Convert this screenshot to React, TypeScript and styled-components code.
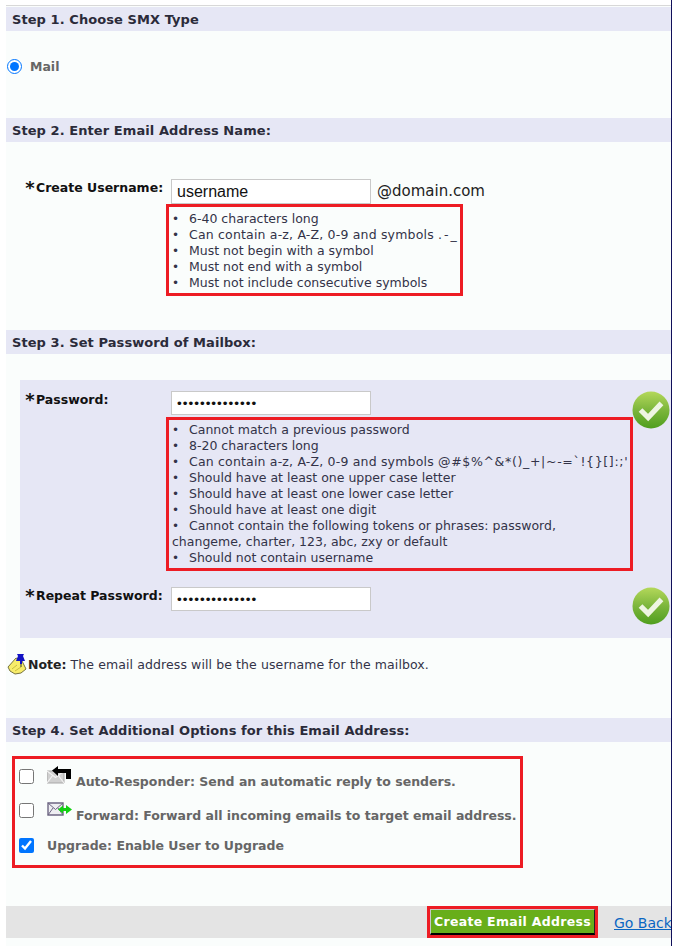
import React from "react";
import styled, { createGlobalStyle } from "styled-components";

const Global = createGlobalStyle`
  html, body { margin: 0; padding: 0; background: #fff; }
  body { font-family: "DejaVu Sans", Verdana, sans-serif; }
`;

const Page = styled("div")`
  width: 665px;
  height: 939px;
  margin-left: 6px;
  padding-top: 7px;
  background: #fafdfc;
  border-right: 1px solid #10105a;
  position: relative;
  overflow: hidden;
  &::before {
    content: "";
    position: absolute;
    left: 0;
    right: 0;
    top: 0;
    height: 5px;
    background: #fff;
    border-bottom: 1px solid #d8d8d8;
  }
`;

const StepHeader = styled("h2")<{ $top?: number }>`
  margin: ${(p) => p.$top ?? 0}px 0 0;
  height: 24px;
  padding-left: 6px;
  background: #e6e7f5;
  color: #2b2b3a;
  font-size: 13px;
  font-weight: bold;
  line-height: 25px;
  letter-spacing: 0.07px;
`;

const MailRow = styled("label")`
  display: flex;
  align-items: center;
  height: 18px;
  margin-top: 26px;
  color: #666;
  font-size: 12.5px;
  font-weight: bold;
`;

const Radio = styled("input")`
  width: 15px;
  height: 15px;
  margin: 0 8px 0 1px;
  accent-color: #0075ff;
`;

const Row = styled("div")<{ $left: number; $top: number; $bottom?: number }>`
  display: flex;
  align-items: flex-start;
  margin: ${(p) => p.$top}px 0 ${(p) => p.$bottom ?? 0}px ${(p) => p.$left}px;
`;

const FieldLabel = styled("label")`
  display: flex;
  width: 147px;
  flex-shrink: 0;
  padding-top: 1px;
  color: #111;
  font-size: 12.5px;
  font-weight: bold;
  line-height: 16px;
`;

const Star = styled("span")`
  width: 12px;
  font-size: 18px;
  line-height: 15px;
  text-align: center;
`;

const TextInput = styled("input")`
  box-sizing: border-box;
  width: 200px;
  height: 25px;
  padding: 1px 5px;
  border: 1px solid #c9c9c9;
  background: #fff;
  color: #111;
  font-family: "Liberation Sans", Arial, sans-serif;
  font-size: 16px;
`;

const PasswordInput = styled(TextInput)`
  height: 24px;
  padding: 1px 2px 1px 5px;
  font-size: 13.5px;
  letter-spacing: 1px;
`;

const Domain = styled("span")`
  margin-left: 6px;
  color: #222;
  font-size: 15px;
  line-height: 25px;
`;

const RuleBox = styled("ul")<{ $left: number; $width: number; $top: number }>`
  box-sizing: border-box;
  width: ${(p) => p.$width}px;
  margin: 0 0 0 ${(p) => p.$left}px;
  padding: ${(p) => p.$top}px 10px 2px 3px;
  border: 3px solid #ed1c24;
  color: #333348;
  font-size: 12.5px;
  line-height: 16px;
  list-style: none;
  li::before {
    content: "•";
    display: inline-block;
    width: 17px;
    font-size: 12px;
    line-height: 0;
  }
`;

const LongRule = styled("li")`
  white-space: nowrap;
  letter-spacing: 0.18px;
`;

const Symbols = styled("span")<{ $spacing: number }>`
  letter-spacing: ${(p) => p.$spacing}px;
`;

const PasswordPanel = styled("section")`
  box-sizing: border-box;
  height: 258px;
  margin: 26px -1px 0 14px;
  background: #e6e7f5;
  padding-top: 11px;
  position: relative;
`;

const Check = styled("svg")<{ $top: number }>`
  position: absolute;
  right: 2px;
  top: ${(p) => p.$top}px;
  width: 38px;
  height: 38px;
`;

const Note = styled("p")`
  display: flex;
  align-items: center;
  margin: 14px 0 0 1px;
  height: 24px;
  color: #333348;
  font-size: 12.5px;
  letter-spacing: 0.1px;
  strong { color: #222; margin-right: 4px; letter-spacing: 0; }
  svg { flex-shrink: 0; }
`;

const OptionBox = styled("div")`
  box-sizing: border-box;
  width: 511px;
  height: 112px;
  margin: 14px 0 0 6px;
  border: 3px solid #ed1c24;
  padding-top: 3px;
`;

const OptionRow = styled("label")<{ $height: number }>`
  display: flex;
  align-items: center;
  height: ${(p) => p.$height}px;
  color: #666;
  font-size: 12.5px;
  font-weight: bold;
  white-space: nowrap;
`;

const Checkbox = styled("input")<{ $shift: number }>`
  width: 15px;
  height: 15px;
  margin: 0 13px 0 4px;
  accent-color: #0075ff;
  position: relative;
  top: ${(p) => p.$shift}px;
`;

const IconSlot = styled("span")`
  display: flex;
  margin-right: 4px;
  position: relative;
  top: -4px;
`;

const OptionText = styled("span")<{ $shift?: number }>`
  position: relative;
  top: ${(p) => p.$shift ?? 0}px;
`;

const Footer = styled("footer")`
  display: flex;
  align-items: center;
  height: 32px;
  margin-top: 38px;
  background: #e4e4e4;
`;

const ButtonFrame = styled("div")`
  box-sizing: border-box;
  width: 171px;
  height: 32px;
  margin-left: 421px;
  border: 3px solid #ed1c24;
`;

const CreateButton = styled("button")`
  box-sizing: border-box;
  display: block;
  width: 165px;
  height: 26px;
  padding: 0;
  border: 1px solid #c8c8c8;
  border-right-color: #222;
  border-bottom: 2px solid #000;
  background: #68ae1a;
  color: #fff;
  font-family: "DejaVu Sans", Verdana, sans-serif;
  font-size: 12.5px;
  font-weight: bold;
  letter-spacing: 0.3px;
  white-space: nowrap;
`;

const GoBack = styled("a")`
  margin-left: 16px;
  color: #0a66c2;
  font-family: "DejaVu Sans", Verdana, sans-serif;
  font-size: 14px;
  text-decoration: underline;
  white-space: nowrap;
  position: relative;
  top: 1px;
`;

const CheckIcon = ({ top, id }: { top: number; id: string }) => (
  <Check $top={top} viewBox="0 0 40 40">
    <defs>
      <linearGradient id={id} x1="0" y1="0" x2="0" y2="1">
        <stop offset="0" stopColor="#b4d85a" />
        <stop offset="0.5" stopColor="#7cb63c" />
        <stop offset="1" stopColor="#4f9e1e" />
      </linearGradient>
    </defs>
    <circle cx="20" cy="20" r="19.5" fill={`url(#${id})`} />
    <path d="M9 20l8 8L31 13" fill="none" stroke="#eef5e2" strokeWidth="5.5" />
  </Check>
);

const NoteIcon = () => (
  <svg width="21" height="22" viewBox="0 0 21 22">
    <path d="M1 14 L9 5 L15 8 L19 16 L14 20 L8 21 L3 18 Z" fill="#f7ec6a" stroke="#77733f" strokeWidth="1" />
    <path d="M5 16l5-4M8 18l6-4" stroke="#c9bd3c" strokeWidth="1" />
    <path d="M10 1h7l-1 2 2 5h-3v3h-2V8H9l2-5z" fill="#1212c4" />
    <path d="M14 11v3" stroke="#333" strokeWidth="1" />
  </svg>
);

const ReplyIcon = () => (
  <svg width="25" height="18" viewBox="0 0 25 18">
    <path d="M0 5h17v12H0z" fill="#d0d0d0" stroke="#a8a8a8" />
    <path d="M0 5l8.5 6.5L17 5M0 17l6-8M17 17l-6-8" fill="none" stroke="#f2f2f2" strokeWidth="1.2" />
    <path d="M5 4.500l6-4.500v3h13v10h-5V7h-8v3z" fill="#000" />
  </svg>
);

const ForwardIcon = () => (
  <svg width="25" height="15" viewBox="0 0 25 15">
    <path d="M1 1h15v12H1z" fill="#eeeef2" stroke="#6d6683" strokeWidth="1.4" />
    <path d="M1 1l7.500 6.500L16 1M1 13l5-7M16 13l-5-7" fill="none" stroke="#6d6683" />
    <path d="M11 7.500l5-4v2.500h3V3l6 4.500L19 12V9h-3v2.500z" fill="#12d012" />
  </svg>
);

export default function App() {
  return (
    <>
      <Global />
      <Page>
        <StepHeader>Step 1. Choose SMX Type</StepHeader>
        <MailRow>
          <Radio type="radio" name="smx" defaultChecked />
          Mail
        </MailRow>

        <StepHeader $top={43}>Step 2. Enter Email Address Name:</StepHeader>
        <Row $left={18} $top={37}>
          <FieldLabel>
            <Star>*</Star>Create Username:
          </FieldLabel>
          <TextInput defaultValue="username" />
          <Domain>@domain.com</Domain>
        </Row>
        <RuleBox $left={160} $width={297} $top={4}>
          <li>6-40 characters long</li>
          <LongRule>
            Can contain a-z, A-Z, 0-9 and symbols <Symbols $spacing={2}>.-_</Symbols>
          </LongRule>
          <li>Must not begin with a symbol</li>
          <li>Must not end with a symbol</li>
          <li>Must not include consecutive symbols</li>
        </RuleBox>

        <StepHeader $top={34}>Step 3. Set Password of Mailbox:</StepHeader>
        <PasswordPanel>
          <CheckIcon top={11} id="okA" />
          <CheckIcon top={207} id="okB" />
          <Row $left={4} $top={0} $bottom={2}>
            <FieldLabel>
              <Star>*</Star>Password:
            </FieldLabel>
            <PasswordInput type="password" defaultValue="aaaaaaaaaaaaaa" />
          </Row>
          <RuleBox $left={146} $width={467} $top={2}>
            <li>Cannot match a previous password</li>
            <li>8-20 characters long</li>
            <LongRule>
              Can contain a-z, A-Z, 0-9 and symbols <Symbols $spacing={0.67}>@#$%^&amp;*()_+|~-=`!{"{}"}[]:;'</Symbols>
            </LongRule>
            <li>Should have at least one upper case letter</li>
            <li>Should have at least one lower case letter</li>
            <li>Should have at least one digit</li>
            <li>Cannot contain the following tokens or phrases: password, changeme, charter, 123, abc, zxy or default</li>
            <li>Should not contain username</li>
          </RuleBox>
          <Row $left={4} $top={16}>
            <FieldLabel>
              <Star>*</Star>Repeat Password:
            </FieldLabel>
            <PasswordInput type="password" defaultValue="aaaaaaaaaaaaaa" />
          </Row>
        </PasswordPanel>

        <Note>
          <NoteIcon />
          <strong>Note:</strong> The email address will be the username for the mailbox.
        </Note>

        <StepHeader $top={42}>Step 4. Set Additional Options for this Email Address:</StepHeader>
        <OptionBox>
          <OptionRow $height={34}>
            <Checkbox type="checkbox" $shift={-3} />
            <IconSlot>
              <ReplyIcon />
            </IconSlot>
            <OptionText $shift={2}>Auto-Responder: Send an automatic reply to senders.</OptionText>
          </OptionRow>
          <OptionRow $height={34}>
            <Checkbox type="checkbox" $shift={-3} />
            <IconSlot>
              <ForwardIcon />
            </IconSlot>
            <OptionText $shift={2}>Forward: Forward all incoming emails to target email address.</OptionText>
          </OptionRow>
          <OptionRow $height={30}>
            <Checkbox type="checkbox" $shift={0} defaultChecked />
            <OptionText>Upgrade: Enable User to Upgrade</OptionText>
          </OptionRow>
        </OptionBox>

        <Footer>
          <ButtonFrame>
            <CreateButton type="button">Create Email Address</CreateButton>
          </ButtonFrame>
          <GoBack href="#">Go Back</GoBack>
        </Footer>
      </Page>
    </>
  );
}
